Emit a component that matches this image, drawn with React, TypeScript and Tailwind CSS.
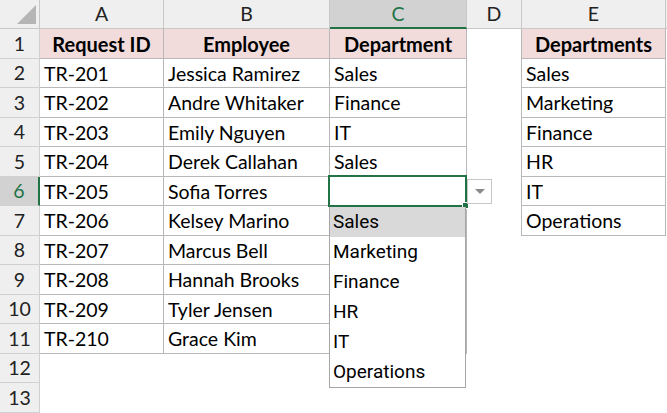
import React from 'react';

const data = [
  ['TR-201', 'Jessica Ramirez', 'Sales', 'Sales'],
  ['TR-202', 'Andre Whitaker', 'Finance', 'Marketing'],
  ['TR-203', 'Emily Nguyen', 'IT', 'Finance'],
  ['TR-204', 'Derek Callahan', 'Sales', 'HR'],
  ['TR-205', 'Sofia Torres', '', 'IT'],
  ['TR-206', 'Kelsey Marino', '', 'Operations'],
  ['TR-207', 'Marcus Bell', '', ''],
  ['TR-208', 'Hannah Brooks', '', ''],
  ['TR-209', 'Tyler Jensen', '', ''],
  ['TR-210', 'Grace Kim', '', ''],
  ['', '', '', ''],
  ['', '', '', ''],
];

const options = ['Sales', 'Marketing', 'Finance', 'HR', 'IT', 'Operations'];

function ColHead({ label, active }: { label: string; active?: boolean }) {
  return (
    <div
      className={
        active
          ? 'flex items-center justify-center bg-[#d2d2d2] border-r border-[#c8c8c8] border-b-2 border-b-[#217346] text-[#217346]'
          : 'flex items-center justify-center bg-[#efefef] border-r border-b border-[#c8c8c8] text-[#222]'
      }
    >
      {label}
    </div>
  );
}

function RowHead({ n, active }: { n: number; active?: boolean }) {
  return (
    <div
      className={
        active
          ? 'flex items-center justify-center bg-[#d2d2d2] border-b border-[#d0d0d0] border-r-2 border-r-[#217346] text-[#217346]'
          : 'flex items-center justify-center bg-[#efefef] border-b border-r border-[#d0d0d0] text-[#222]'
      }
    >
      {n}
    </div>
  );
}

function Cell({ text, boxed }: { text: string; boxed: boolean }) {
  return (
    <div
      className={
        boxed
          ? 'flex items-center pl-[4px] pt-[1px] border-r border-b border-[#b8b8b8] bg-white whitespace-nowrap overflow-hidden'
          : 'flex items-center pl-[4px] pt-[1px] bg-white whitespace-nowrap overflow-hidden'
      }
    >
      {text}
    </div>
  );
}

function HeadCell({ text }: { text: string }) {
  return (
    <div className="flex items-center justify-center pt-[1px] font-bold text-[20px] bg-[#f2dcdb] border-r border-b border-[#b8b8b8] whitespace-nowrap">
      {text}
    </div>
  );
}

export default function App() {
  return (
    <div className="relative w-[667px] h-[413px] overflow-hidden bg-white text-[19.5px] text-black font-['Lato','Liberation_Sans',sans-serif]">
      <div className="grid grid-cols-[40px_124px_166px_137px_55px_144px_1fr] grid-rows-[29px_30px_29px_30px_29px_30px_29px_30px_29px_30px_29px_30px_29px_30px] h-full">
        {/* corner */}
        <div className="relative bg-[#efefef] border-r border-b border-[#c8c8c8]">
          <div className="absolute right-[3px] bottom-[4px] w-0 h-0 border-l-[19px] border-l-transparent border-b-[19px] border-b-[#b5b5b5]" />
        </div>
        <ColHead label="A" />
        <ColHead label="B" />
        <ColHead label="C" active />
        <ColHead label="D" />
        <ColHead label="E" />
        <div className="bg-[#efefef] border-b border-[#c8c8c8]" />

        {/* row 1 */}
        <RowHead n={1} />
        <HeadCell text="Request ID" />
        <HeadCell text="Employee" />
        <HeadCell text="Department" />
        <div className="bg-white border-r border-[#b8b8b8]" />
        <HeadCell text="Departments" />
        <div className="bg-white" />

        {data.map((r, i) => {
          const n = i + 2;
          const inTable = n <= 11;
          const inE = n <= 7;
          return (
            <React.Fragment key={n}>
              <RowHead n={n} active={n === 6} />
              <Cell text={r[0]} boxed={inTable} />
              <Cell text={r[1]} boxed={inTable} />
              <Cell text={r[2]} boxed={inTable} />
              <div className={inE ? 'bg-white border-r border-[#b8b8b8]' : 'bg-white'} />
              <Cell text={r[3]} boxed={inE} />
              <div className="bg-white" />
            </React.Fragment>
          );
        })}
      </div>

      {/* active cell C6 */}
      <div className="absolute left-[328px] top-[175px] w-[139px] h-[32px] border-2 border-[#217346] bg-white" />
      <div className="absolute left-[462px] top-[202px] w-[7px] h-[7px] bg-[#217346] border border-white" />

      {/* dropdown button */}
      <div className="absolute left-[467px] top-[179px] w-[25px] h-[25px] bg-white border border-[#c6c6c6] flex items-center justify-center">
        <div className="w-0 h-0 border-l-[5px] border-r-[5px] border-t-[5px] border-l-transparent border-r-transparent border-t-[#8a8a8a]" />
      </div>

      {/* dropdown list */}
      <div className="absolute left-[329px] top-[207px] w-[137px] bg-white border border-t-0 border-[#a6a6a6] font-['Roboto','Liberation_Sans',sans-serif] text-[19px]">
        {options.map((o, i) => (
          <div
            key={o}
            className={i === 0 ? 'h-[30px] flex items-center pl-[3px] bg-[#d9d9d9]' : 'h-[30px] flex items-center pl-[3px]'}
          >
            {o}
          </div>
        ))}
      </div>
    </div>
  );
}
